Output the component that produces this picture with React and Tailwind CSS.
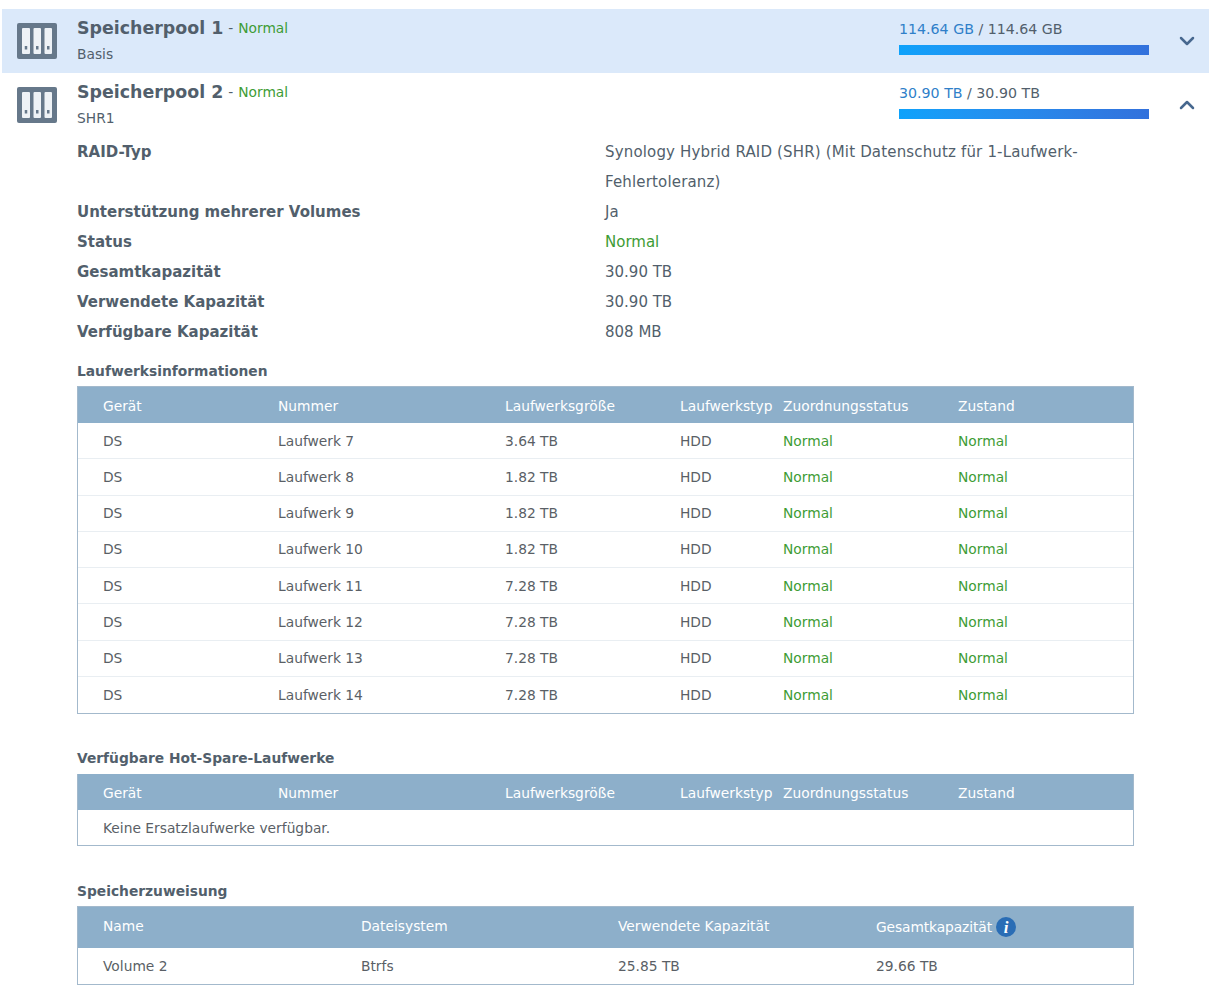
import React from 'react';
import { ChevronDown, ChevronUp } from 'lucide-react';

const driveColumns = ['Gerät', 'Nummer', 'Laufwerksgröße', 'Laufwerkstyp', 'Zuordnungsstatus', 'Zustand'];
const driveGrid = 'grid grid-cols-[175px_227px_175px_103px_175px_1fr] pl-[25px]';
const volumeGrid = 'grid grid-cols-[258px_257px_258px_1fr] pl-[25px]';

const drives = [
  ['Laufwerk 7', '3.64 TB'],
  ['Laufwerk 8', '1.82 TB'],
  ['Laufwerk 9', '1.82 TB'],
  ['Laufwerk 10', '1.82 TB'],
  ['Laufwerk 11', '7.28 TB'],
  ['Laufwerk 12', '7.28 TB'],
  ['Laufwerk 13', '7.28 TB'],
  ['Laufwerk 14', '7.28 TB'],
];

const details = [
  ['Unterstützung mehrerer Volumes', 'Ja'],
  ['Status', 'Normal'],
  ['Gesamtkapazität', '30.90 TB'],
  ['Verwendete Kapazität', '30.90 TB'],
  ['Verfügbare Kapazität', '808 MB'],
];

function PoolIcon() {
  return (
    <svg width="40" height="36" viewBox="0 0 40 36" className="shrink-0">
      <rect x="0" y="0" width="40" height="36" rx="2" fill="#66788a" />
      <rect x="5" y="5" width="8" height="26" rx="1" fill="#eef2f6" />
      <rect x="16.5" y="5" width="7.5" height="26" rx="1" fill="#eef2f6" />
      <rect x="27.5" y="5" width="7.5" height="26" rx="1" fill="#eef2f6" />
      <rect x="7.75" y="23" width="2.5" height="3.5" fill="#66788a" />
      <rect x="19" y="23" width="2.5" height="3.5" fill="#66788a" />
      <rect x="30" y="23" width="2.5" height="3.5" fill="#66788a" />
    </svg>
  );
}

function PoolHeader({ name, type, used, total, open }) {
  return (
    <div className={`flex h-[64px] items-start pl-[15px] ${open ? 'bg-white' : 'bg-[#dbe9fa]'}`}>
      <div className="mt-[14px]">
        <PoolIcon />
      </div>
      <div className="ml-5 flex-1 pt-[6px]">
        <div className="flex h-[26px] items-center">
          <span className="text-[17.4px] font-bold text-[#525f6c]">{name}</span>
          <span className="ml-[5px] text-[#525f6c]">-</span>
          <span className="ml-[5px] pt-px text-[#3e9c35]">Normal</span>
        </div>
        <div className="mt-[3px] leading-[20px] text-[#525f6c]">{type}</div>
      </div>
      <div className="w-[250px] pt-[10px]">
        <div className="h-[20px] text-[14.2px] leading-[20px] text-[#525f6c]">
          <span className="text-[#2f7fc9]">{used}</span> / {total}
        </div>
        <div className="mt-[6px] h-[10px] bg-gradient-to-r from-[#0da2fb] to-[#3271dc]" />
      </div>
      <div className="w-[60px] pl-[26px] pt-[20px] text-[#47688f]">
        {open ? <ChevronUp size={24} strokeWidth={2.5} /> : <ChevronDown size={24} strokeWidth={2.5} />}
      </div>
    </div>
  );
}

function TableHead({ columns, grid }) {
  return (
    <div className={`${grid} h-[36px] items-center bg-[#8dafca] pt-[2px] text-white`}>
      {columns.map((c) => (
        <div key={c}>{c}</div>
      ))}
    </div>
  );
}

export default function App() {
  return (
    <div className="min-h-[994px] bg-white pt-[9px] pl-[2px] pr-[10px] text-[13.8px] text-[#525f6c] [font-family:'DejaVu_Sans',sans-serif]">
      <PoolHeader name="Speicherpool 1" type="Basis" used="114.64 GB" total="114.64 GB" />
      <PoolHeader name="Speicherpool 2" type="SHR1" used="30.90 TB" total="30.90 TB" open />

      <div className="pl-[75px] pr-[75px]">
        {/* Details */}
        <div className="grid grid-cols-[528px_1fr] text-[15px] leading-[30px]">
          <div className="font-bold">RAID-Typ</div>
          <div className="w-[490px] tracking-[0.16px]">Synology Hybrid RAID (SHR) (Mit Datenschutz für 1-Laufwerk-Fehlertoleranz)</div>
          {details.map(([label, value]) => (
            <React.Fragment key={label}>
              <div className="font-bold">{label}</div>
              <div className={value === 'Normal' ? 'text-[#3e9c35]' : ''}>{value}</div>
            </React.Fragment>
          ))}
        </div>

        {/* Laufwerksinformationen */}
        <div className="mt-[14px] h-[25px] font-bold leading-[20px]">Laufwerksinformationen</div>
        <div className="border border-[#a3b9cc] text-[#5a5f66]">
          <TableHead columns={driveColumns} grid={driveGrid} />
          {drives.map(([num, size], i) => (
            <div key={num} className={`${driveGrid} h-[36.25px] items-center pt-[0.5px] ${i < drives.length - 1 ? 'border-b border-[#e9eef2]' : ''}`}>
              <div>DS</div>
              <div>{num}</div>
              <div>{size}</div>
              <div>HDD</div>
              <div className="text-[#3e9c35]">Normal</div>
              <div className="text-[#3e9c35]">Normal</div>
            </div>
          ))}
        </div>

        {/* Hot-Spare */}
        <div className="mt-[35px] h-[25px] font-bold leading-[18px]">Verfügbare Hot-Spare-Laufwerke</div>
        <div className="border-x border-b border-[#a3b9cc] text-[#5a5f66]">
          <TableHead columns={driveColumns} grid={driveGrid} />
          <div className="flex h-[35px] items-center pl-[25px] pt-px">Keine Ersatzlaufwerke verfügbar.</div>
        </div>

        {/* Speicherzuweisung */}
        <div className="mt-[36px] h-[24px] font-bold leading-[18px]">Speicherzuweisung</div>
        <div className="border border-[#a3b9cc] text-[#5a5f66]">
          <div className={`${volumeGrid} h-[41px] items-center bg-[#8dafca] pb-[3px] text-white`}>
            <div>Name</div>
            <div>Dateisystem</div>
            <div>Verwendete Kapazität</div>
            <div className="mt-[2px] flex items-center gap-[4px]">
              <span className="tracking-[-0.1px]">Gesamtkapazität</span>
              <svg width="20" height="20" viewBox="0 0 20 20">
                <circle cx="10" cy="10" r="10" fill="#2a6db5" />
                <text x="10" y="15.5" textAnchor="middle" fontSize="17" fontWeight="700" fontStyle="italic" fill="#fff" fontFamily="Liberation Serif, serif">i</text>
              </svg>
            </div>
          </div>
          <div className={`${volumeGrid} h-[36px] items-center`}>
            <div>Volume 2</div>
            <div>Btrfs</div>
            <div>25.85 TB</div>
            <div>29.66 TB</div>
          </div>
        </div>
      </div>
    </div>
  );
}
